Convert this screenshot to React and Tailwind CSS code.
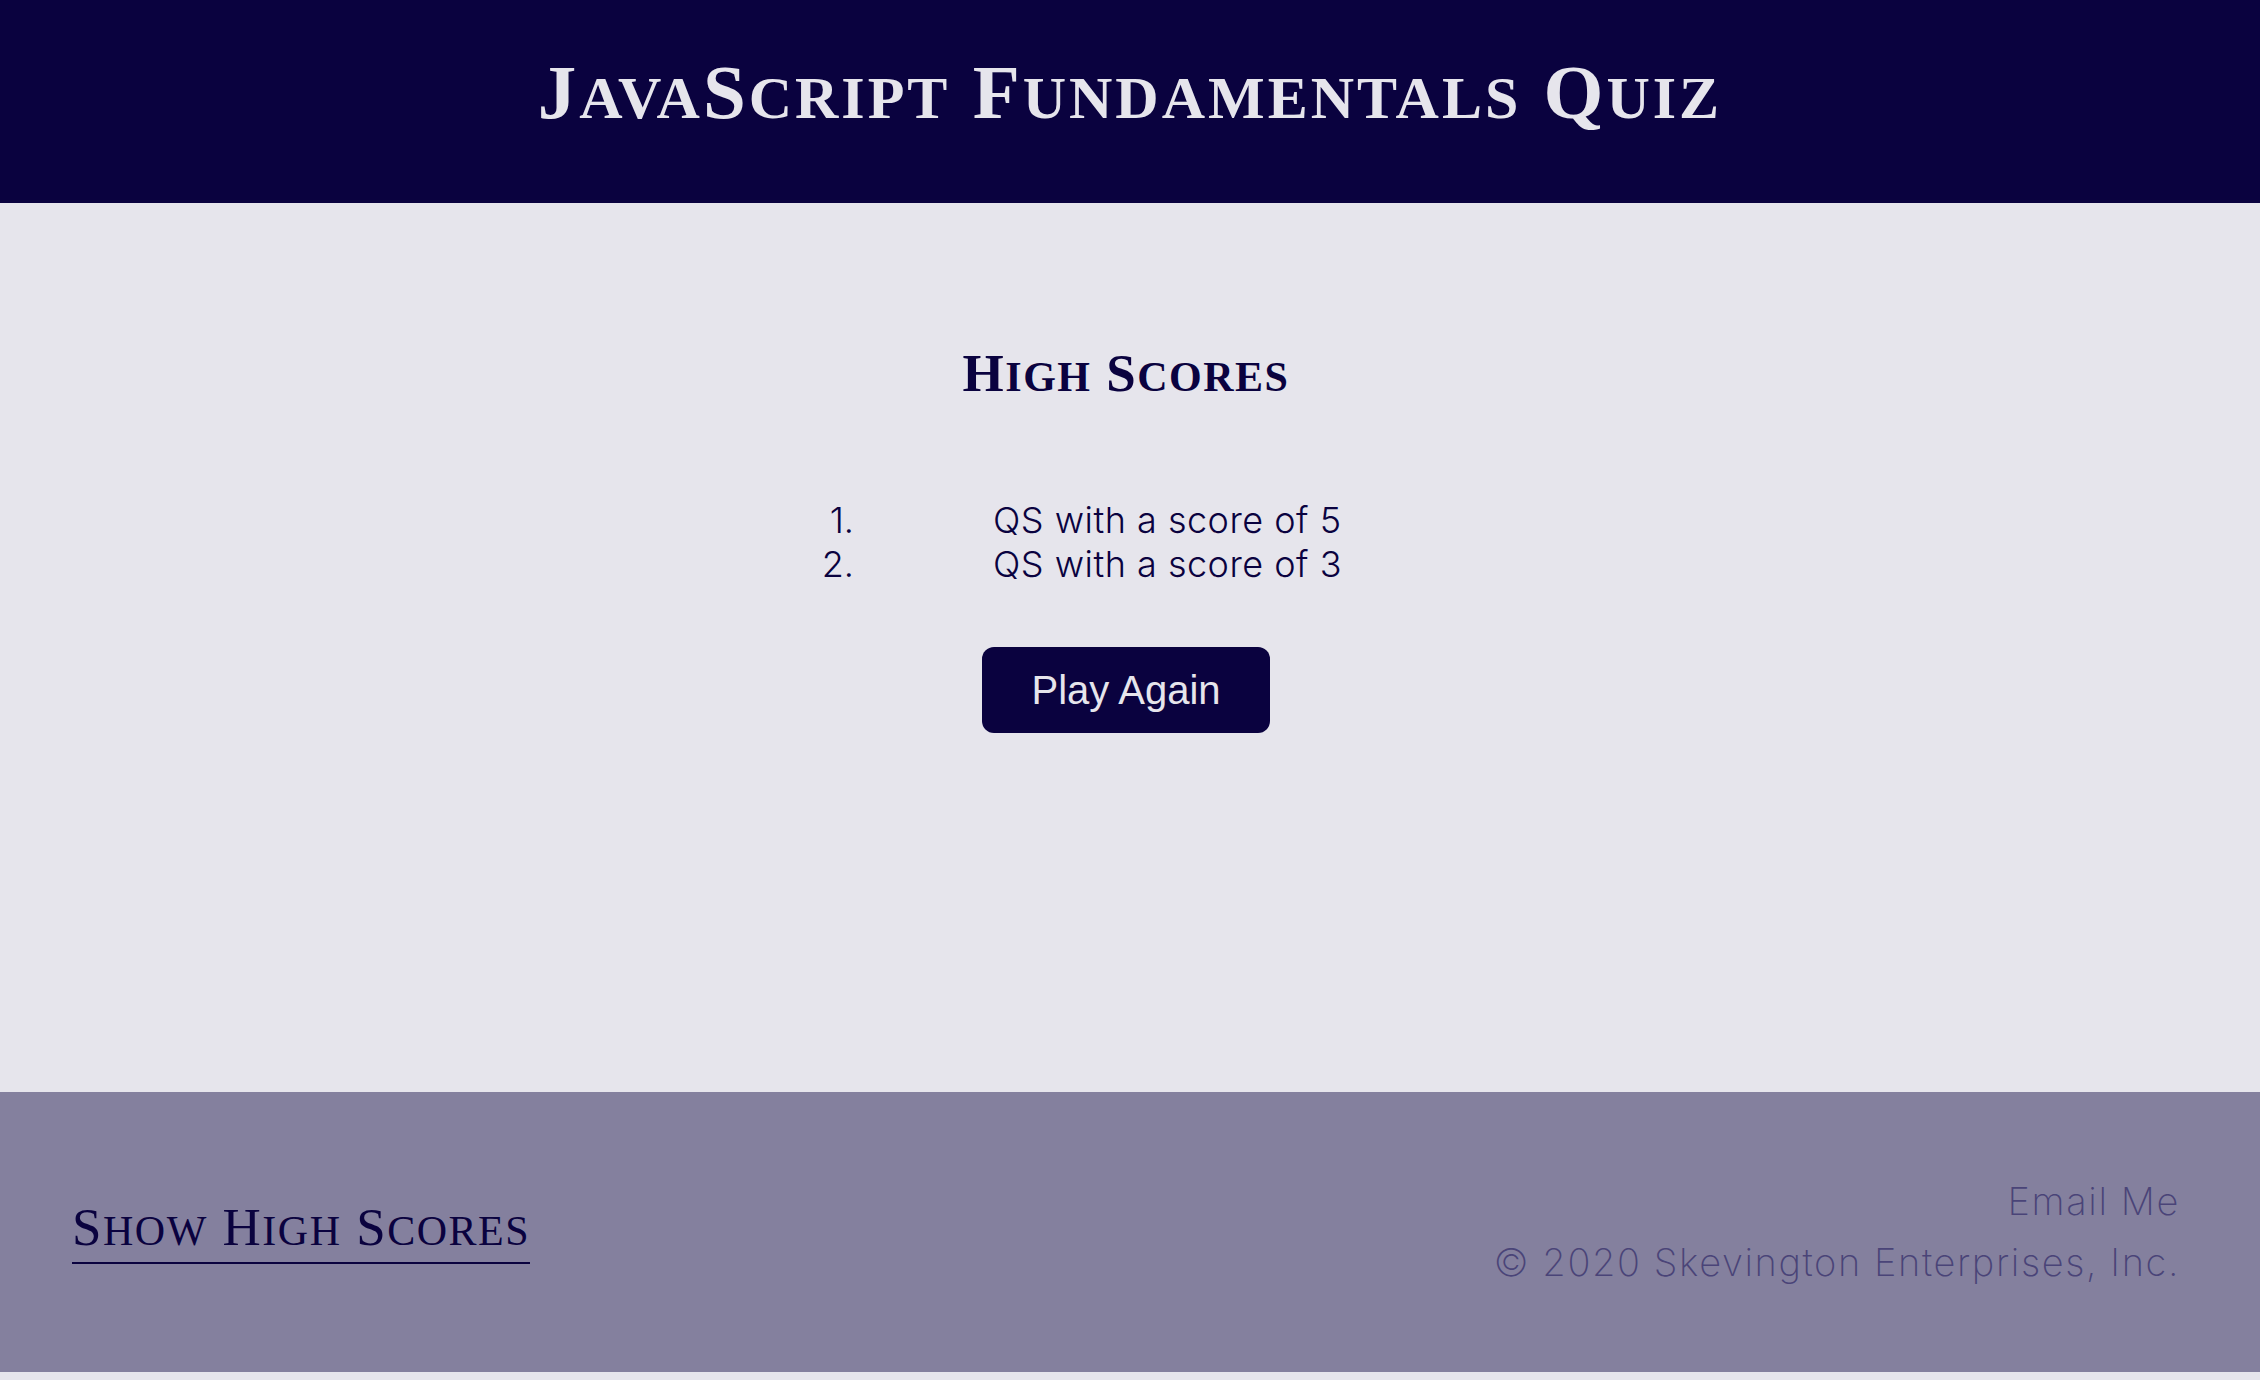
import React from 'react';

const scores = [
  { name: 'QS', score: 5 },
  { name: 'QS', score: 3 },
];

// Cinzel-like small caps: capitals stay full size, lowercase runs become smaller capitals
function SmallCaps({ text, small }) {
  return text.split(/([a-z]+)/).map((part, i) =>
    /^[a-z]+$/.test(part) ? (
      <span key={i} className={small + ' uppercase'}>{part}</span>
    ) : (
      <React.Fragment key={i}>{part}</React.Fragment>
    )
  );
}

export default function App() {
  return (
    <div className="h-[1380px] flex flex-col bg-[#e6e5ec]">
      <header className="h-[203px] bg-[#0a023f] flex justify-center pt-[54px]">
        <h1 className="font-['Liberation_Serif',serif] font-bold text-[77px] leading-none tracking-[3px] text-[#e6e5ec]">
          <SmallCaps text="JavaScript Fundamentals Quiz" small="text-[60px]" />
        </h1>
      </header>

      <main className="flex-1 flex flex-col items-center pt-[144px] pr-[8px]">
        <h2 className="font-['Liberation_Serif',serif] font-bold text-[53px] leading-none tracking-[1.5px] text-[#0a023f]">
          <SmallCaps text="High Scores" small="text-[42px]" />
        </h2>

        <ol className="mt-[98px] ml-[10px] w-[700px] font-['Inter',sans-serif] font-light text-[36px] leading-[44px] text-[#0a023f]">
          {scores.map((s, i) => (
            <li key={i} className="flex">
              <span className="w-[73px] text-right">{i + 1}.</span>
              <span className="ml-[139px] tracking-[0.5px]">{s.name} with a score of {s.score}</span>
            </li>
          ))}
        </ol>

        <button className="mt-[61px] w-[288px] h-[86px] rounded-[12px] bg-[#0a023f] text-[#e6e5ec] font-['Liberation_Sans',Arial,sans-serif] text-[40px]">
          Play Again
        </button>
      </main>

      <footer className="h-[280px] mb-[8px] bg-[#84809e] flex items-center justify-between pl-[72px] pr-[80px]">
        <a href="#" className="font-['Liberation_Serif',serif] text-[53px] leading-none tracking-[1.5px] text-[#0a023f] pb-[8px] border-b-2 border-[#0a023f]">
          <SmallCaps text="Show High Scores" small="text-[42px]" />
        </a>
        <div className="text-right font-['Inter',sans-serif] font-extralight text-[38px] leading-[61px] tracking-[1.6px] text-[#4a4478]">
          <div>Email Me</div>
          <div>© 2020 Skevington Enterprises, Inc.</div>
        </div>
      </footer>
    </div>
  );
}
